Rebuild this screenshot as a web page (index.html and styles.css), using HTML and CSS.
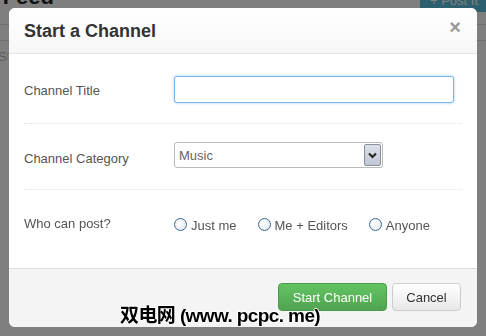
FILE: index.html
```html
<!DOCTYPE html>
<html lang="en">
<head>
  <meta charset="UTF-8">
  <meta name="viewport" content="width=device-width, initial-scale=1.0">
  <title>Start a Channel</title>
  <link rel="stylesheet" href="styles.css">
</head>
<body>
  <div class="page">
    <div class="page-head">
      <h2>My Feed</h2>
      <a class="post-btn" href="#">+ Post It</a>
    </div>
    <div class="page-tabs"></div>
    <p class="page-text">Start</p>
  </div>

  <div class="backdrop"></div>

  <div class="modal">
    <div class="modal-header">
      <h3>Start a Channel</h3>
      <span class="close">&times;</span>
    </div>

    <form class="modal-body">
      <div class="row row-title">
        <label for="title">Channel Title</label>
        <input type="text" id="title" class="field">
      </div>

      <div class="row row-cat">
        <label>Channel Category</label>
        <div class="select">
          <span class="select-text">Music</span>
          <span class="select-arrow">
            <svg width="9" height="7" viewBox="0 0 9 7"><path d="M1 1.5 L4.5 5 L8 1.5" fill="none" stroke="#222" stroke-width="2"/></svg>
          </span>
        </div>
      </div>

      <div class="row row-who">
        <label>Who can post?</label>
        <div class="radios">
          <span class="radio"><i></i>Just me</span>
          <span class="radio"><i></i>Me + Editors</span>
          <span class="radio"><i></i>Anyone</span>
        </div>
      </div>
    </form>

    <div class="modal-footer">
      <button class="btn btn-green" type="button">Start Channel</button>
      <button class="btn btn-cancel" type="button">Cancel</button>
    </div>
  </div>

  <div class="watermark">双电网 (www. pcpc. me)</div>
</body>
</html>
```

FILE: styles.css
```css
body {
  margin: 0;
  font-family: Arial, 'Liberation Sans', sans-serif;
  background: #fff;
  height: 336px;
  overflow: hidden;
}
.page-head {
  display: flex;
  justify-content: space-between;
  height: 24px;
  border-bottom: 1px solid #ddd;
}
.page-head h2 {
  margin: -16px 0 0 -34px;
  font-size: 22px;
  color: #222;
}
.post-btn {
  width: 56px;
  height: 12px;
  background: #5bc0de;
  color: #fff;
  font-size: 13px;
  text-decoration: none;
  overflow: hidden;
  line-height: 2px;
  padding-left: 10px;
}
.page-tabs {
  height: 15px;
  border-bottom: 1px solid #ddd;
}
.page-text {
  margin: 8px 0 0 -2px;
  width: 10px;
  overflow: hidden;
  font-size: 13px;
  color: #bbb;
}
.backdrop {
  position: fixed;
  inset: 0;
  background: rgba(0,0,0,0.5);
}
.modal {
  position: absolute;
  left: 9px;
  top: 8px;
  width: 468px;
  height: 319px;
  background: #fff;
  border-radius: 6px;
  display: flex;
  flex-direction: column;
}
.modal-header {
  height: 45px;
  padding: 0 15px;
  display: flex;
  justify-content: space-between;
  align-items: center;
  border-bottom: 1px solid #e5e5e5;
  background: linear-gradient(#fff, #f7f7f7);
  border-radius: 6px 6px 0 0;
}
.modal-header h3 {
  margin: 2px 0 0;
  font-size: 18px;
  color: #333;
}
.close {
  font-size: 20px;
  font-weight: bold;
  color: #999;
  margin: -7px 1px 0 0;
}
.modal-body {
  padding: 0 15px;
  flex: 1;
}
.row {
  display: flex;
  align-items: center;
  border-bottom: 1px dotted #e3e3e3;
}
.row label {
  width: 150px;
  font-size: 13px;
  color: #555;
}
.row-title { height: 69px; }
.row-cat { height: 65px; }
.row-who {
  height: 56px;
  padding-top: 6px;
  border-bottom: none;
}
.row-title label { margin-top: 4px; }
.row-cat label { margin-top: 4px; }
.row-who label { margin-top: -2px; }
.field {
  width: 280px;
  height: 27px;
  box-sizing: border-box;
  border: 1px solid #7cb4ec;
  border-radius: 3px;
  box-shadow: 0 0 3px rgba(82,168,236,0.6);
  outline: none;
  margin-top: 1px;
}
.select {
  width: 209px;
  height: 26px;
  box-sizing: border-box;
  border: 1px solid #bbb;
  border-radius: 3px;
  display: flex;
  justify-content: space-between;
  margin-top: -3px;
}
.select-text {
  font-size: 13px;
  color: #666;
  padding: 5px 0 0 4px;
}
.select-arrow {
  width: 15px;
  margin: 1px 1px 1px 0;
  background: linear-gradient(#dde0ea, #c3c7d5);
  border: 1px solid #8c8f99;
  border-radius: 2px;
  display: flex;
  align-items: center;
  justify-content: center;
}
.radios {
  display: flex;
  gap: 21px;
  margin-top: 2px;
}
.radio {
  display: flex;
  align-items: center;
  font-size: 13px;
  color: #555;
}
.radio i {
  width: 11px;
  height: 11px;
  border: 1px solid #3d6a91;
  border-radius: 50%;
  background: radial-gradient(circle at 40% 40%, #fff, #dde4ec);
  margin-right: 4px;
  margin-top: -2px;
}
.modal-footer {
  height: 44px;
  padding: 14px 16px 0 0;
  background: #f4f4f4;
  border-top: 1px solid #ddd;
  border-radius: 0 0 6px 6px;
  display: flex;
  justify-content: flex-end;
  align-items: flex-start;
  gap: 5px;
}
.btn {
  height: 28px;
  padding: 0;
  font-family: Arial, 'Liberation Sans', sans-serif;
  font-size: 13px;
  color: #333;
  background: linear-gradient(#fff, #e8e8e8);
  border: 1px solid #ccc;
  border-radius: 4px;
}
.btn-cancel { width: 69px; }
.btn-green {
  width: 109px;
  color: #fff;
  background: linear-gradient(#62c462, #51a351);
  border-color: #4a9a4a;
}
.watermark {
  position: absolute;
  left: 120px;
  top: 300px;
  font-family: 'Liberation Sans', 'Noto Sans CJK SC', sans-serif;
  font-size: 19px;
  font-weight: bold;
  color: #000;
  letter-spacing: -0.6px;
  text-shadow: 1px 0 #fff, -1px 0 #fff, 0 1px #fff, 0 -1px #fff;
}
```
